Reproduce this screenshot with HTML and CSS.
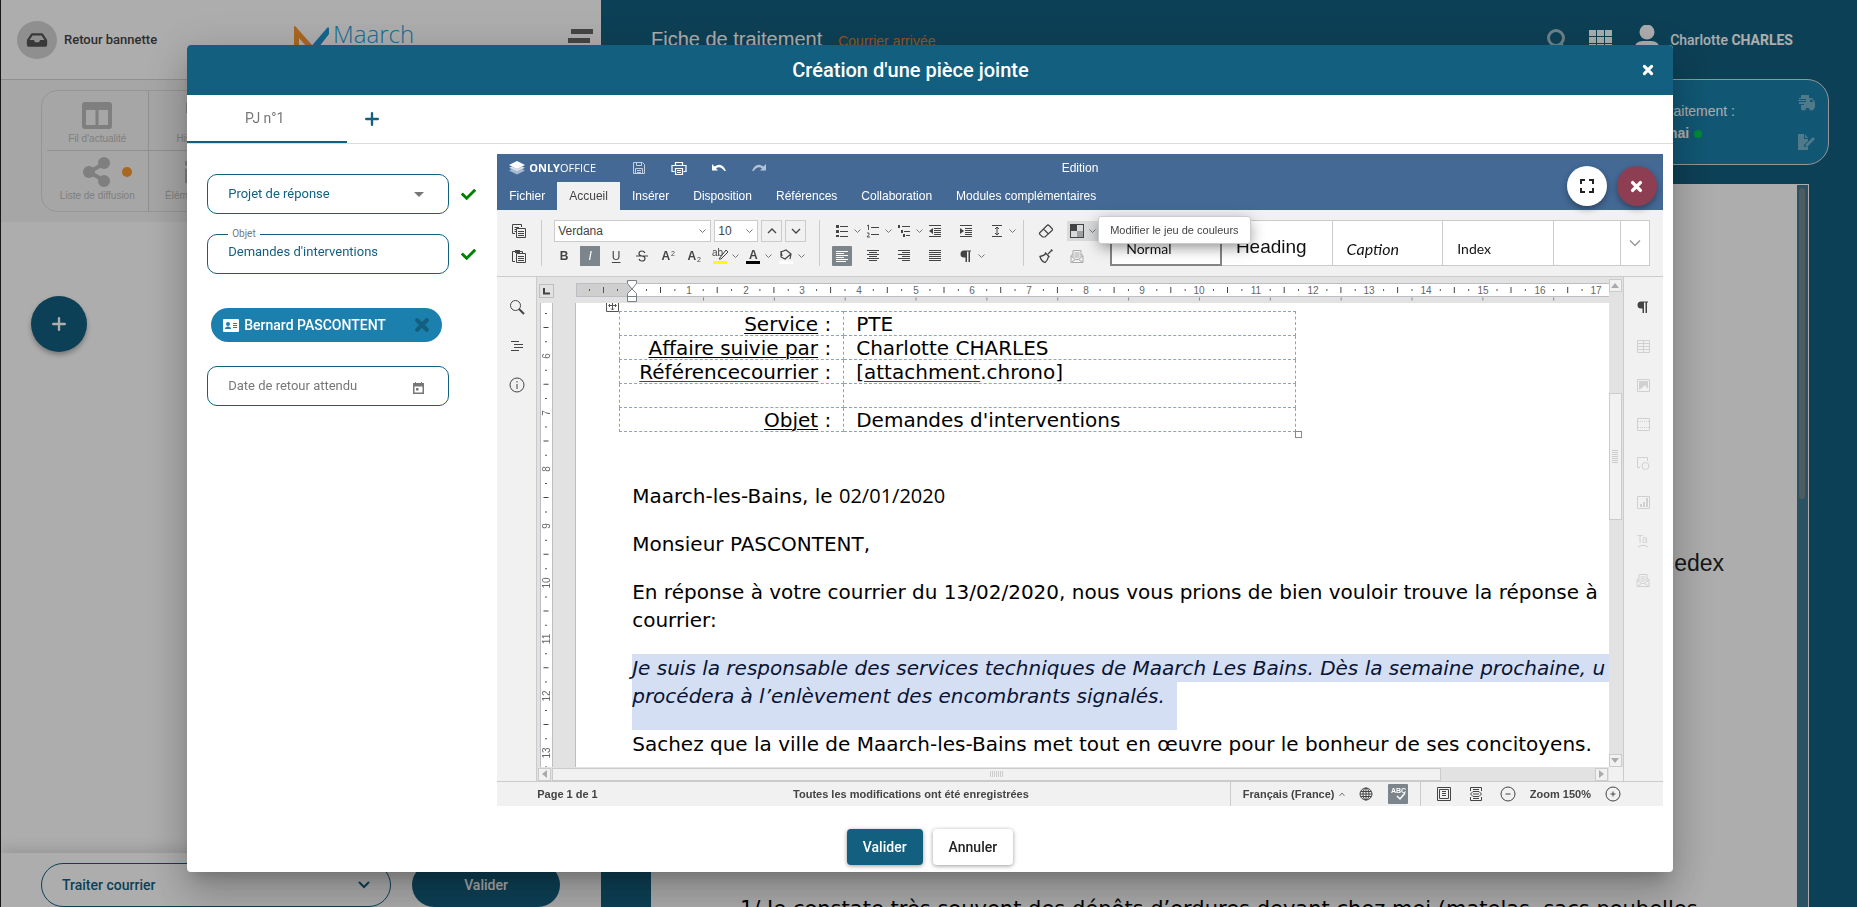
FILE: index.html
```html
<!DOCTYPE html>
<html lang="fr">
<head>
<meta charset="utf-8">
<title>Maarch - Création d'une pièce jointe</title>
<link rel="stylesheet" href="styles.css">
</head>
<body>
<svg class="defs" aria-hidden="true">
  <symbol id="caret" viewBox="0 0 7 5"><path d="M.5 .5L3.500 3.500L6.500 .5" fill="none" stroke="#777"/></symbol>
  <symbol id="check" viewBox="0 0 512 512"><path d="M173.900 439.400l-166.400-166.400c-10-10-10-26.200 0-36.200l36.200-36.200c10-10 26.200-10 36.200 0L192 312.700 432.100 72.600c10-10 26.200-10 36.200 0l36.200 36.200c10 10 10 26.200 0 36.200l-294.400 294.400c-10 10-26.200 10-36.200 0z"/></symbol>
  <symbol id="cross" viewBox="0 0 10 10"><path d="M2 2L8 8M8 2L2 8" fill="none" stroke="currentColor" stroke-width="2.600" stroke-linecap="round"/></symbol>
  <symbol id="plus" viewBox="0 0 12 12"><path d="M6 1V11M1 6H11" fill="none" stroke="currentColor" stroke-width="2" stroke-linecap="round"/></symbol>
  <symbol id="para" viewBox="0 0 16 16"><path d="M13 2.500H6a3.500 3.500 0 0 0 0 7H7.500V14H9V3.500H10.500V14H12V3.500H13z" fill="currentColor"/></symbol>
  <symbol id="mail" viewBox="0 0 16 16"><path d="M4 6L2 7.500V14.500H14V7.500L12 6M4 9V2.500H12V9M2 8L6.500 11.500H9.500L14 8M2.500 14L6.500 11.500M13.500 14L9.500 11.500M5.500 5H10.500M5.500 7H10.500M5.500 9H10.500" fill="none" stroke="currentColor"/></symbol>
</svg>

<div class="app">
  <section class="side">
    <header class="side-head">
      <a class="back" href="#">
        <span class="back-icon"><svg width="22" height="18" viewBox="0 0 576 512"><path fill="currentColor" d="M567.900 243.900L462.400 85.700A48 48 0 0 0 422.500 64H153.500a48 48 0 0 0-39.900 21.400L8.100 243.900A48 48 0 0 0 0 270.500V400a48 48 0 0 0 48 48h480a48 48 0 0 0 48-48V270.500a48 48 0 0 0-8.100-26.600zM162.300 128h251.400l85.300 128H376l-32 64H232l-32-64H77z"/></svg></span>
        <span>Retour bannette</span>
      </a>
      <div class="brand">
        <svg width="36" height="34" viewBox="0 0 36 34"><path d="M0 32V4Q0 2 2 4L18 22V30L5 15V32z" fill="#f99830"/><path d="M15 26L33 5Q35 3 35 6V11L18 33z" fill="#1e96cf"/></svg>
        <span>Maarch</span>
      </div>
      <button class="burger" aria-label="Menu"><i></i><i></i></button>
    </header>
    <div class="tools-band">
      <nav class="tools">
        <a href="#"><svg width="30" height="27" viewBox="0 0 30 27"><path fill="currentColor" fill-rule="evenodd" d="M3 0H27a3 3 0 0 1 3 3V24a3 3 0 0 1-3 3H3a3 3 0 0 1-3-3V3a3 3 0 0 1 3-3zM4 8V23H13.500V8zM16.500 8V23H26V8z"/></svg>Fil d'actualité</a>
        <a href="#"><svg width="30" height="27" viewBox="0 0 30 27"><path fill="currentColor" d="M2 0V11H13L9 7A9 9 0 1 1 7 20L4 23A13 13 0 1 0 6 4z"/></svg>Historique</a>
        <a href="#"><svg width="28" height="30" viewBox="0 0 28 30"><path d="M22 6L6 15L22 24" fill="none" stroke="currentColor" stroke-width="4"/><circle cx="21" cy="6" r="6" fill="currentColor"/><circle cx="6" cy="15" r="6" fill="currentColor"/><circle cx="21" cy="24" r="6" fill="currentColor"/></svg>Liste de diffusion<b class="dot"></b></a>
        <a href="#"><svg width="28" height="30" viewBox="0 0 28 30"><path fill="currentColor" d="M0 4H28V8L14 16L0 8zM0 11L14 19L28 11V26H0z"/></svg>Éléments joints</a>
      </nav>
    </div>
    <div class="side-body"><button class="fab" aria-label="Ajouter"><svg width="14" height="14"><use href="#plus"/></svg></button></div>
    <footer class="side-foot">
      <button class="action">Traiter courrier<svg width="12" height="8" viewBox="0 0 12 8"><path d="M1.500 1.500L6 6L10.500 1.500" fill="none" stroke="currentColor" stroke-width="2" stroke-linecap="round"/></svg></button>
      <button class="go">Valider</button>
    </footer>
  </section>

  <main class="main">
    <header class="main-head">
      <h1>Fiche de traitement</h1><span class="kind">Courrier arrivée</span>
      <div class="user">
        <svg width="20" height="22" viewBox="0 0 20 22" class="faded"><circle cx="9" cy="9" r="7.500" fill="none" stroke="currentColor" stroke-width="3"/><path d="M14 15L19 21" stroke="currentColor" stroke-width="3"/></svg>
        <svg width="23" height="20" viewBox="0 0 23 20"><path fill="currentColor" d="M0 0H7V6H0zM8 0H15V6H8zM16 0H23V6H16zM0 7H7V13H0zM8 7H15V13H8zM16 7H23V13H16zM0 14H7V20H0zM8 14H15V20H8zM16 14H23V20H16z"/></svg>
        <svg width="26" height="30" viewBox="0 0 26 30"><ellipse cx="13" cy="7" rx="7.500" ry="7.500" fill="currentColor"/><path d="M0 30V24Q1 16 9 16H17Q25 16 26 24V30z" fill="currentColor"/></svg>
        <span>Charlotte <b>CHARLES</b></span>
      </div>
    </header>
    <div class="info-card">
      <div class="info-text"><span>traitement :</span><b>mai<i></i></b></div>
      <div class="info-icons">
        <svg width="18" height="16" viewBox="0 0 18 16"><path fill="currentColor" d="M3 0H11V3H14L17 7V13H16A2.500 2.500 0 0 1 11 13H8A2.500 2.500 0 0 1 3 13V10H6V9H1V7H8V6H0V5H8V4H1V3H3z"/><path d="M12 4.500H13.500L15.500 7H12z" fill="#1a80ab"/></svg>
        <svg width="17" height="16" viewBox="0 0 17 16"><path fill="currentColor" d="M0 0H6V5H10V7L6 11V13H9L10 12V16H0zM7 0L10 4H7zM15 3L17 5L10 12L7 13L8 10z"/></svg>
      </div>
    </div>
    <div class="letter">
      <div class="letter-page"><p class="place">Cedex</p><p class="plaint">1/ Je constate très souvent des dépôts d’ordures devant chez moi (matelas, sacs poubelles,</p></div>
      <div class="letter-bar"><i></i></div>
    </div>
  </main>
</div>

<div class="backdrop">
<div class="modal" role="dialog" aria-labelledby="dlg-title">
  <header class="modal-head"><h2 id="dlg-title">Création d'une pièce jointe</h2><button aria-label="Fermer"><svg width="12" height="12"><use href="#cross"/></svg></button></header>
  <nav class="tabs"><button class="tab">PJ n°1</button><button class="add" aria-label="Ajouter une pièce jointe"><svg width="14" height="14"><use href="#plus"/></svg></button></nav>
  <div class="modal-body">
    <form class="form">
      <div class="row"><div class="field"><select aria-label="Type"><option>Projet de réponse</option></select><svg width="10" height="5" viewBox="0 0 10 5"><path d="M0 0H10L5 5z" fill="#777"/></svg></div><svg class="ok" width="15" height="15"><use href="#check"/></svg></div>
      <div class="row"><div class="field"><label for="objet">Objet</label><input id="objet" type="text" value="Demandes d'interventions"></div><svg class="ok" width="15" height="15"><use href="#check"/></svg></div>
      <div class="chip"><svg width="16" height="13" viewBox="0 0 16 13"><rect width="16" height="13" rx="1" fill="#fff"/><circle cx="5" cy="5" r="2" fill="#1b80ad"/><path d="M2 10Q2 7.500 5 7.500T8 10zM10 4H14V5H10zM10 6H14V7H10zM10 8H14V9H10z" fill="#1b80ad"/></svg><span>Bernard PASCONTENT</span><button type="button" aria-label="Retirer"><svg width="16" height="16"><use href="#cross"/></svg></button></div>
      <div class="row"><div class="field"><input type="text" placeholder="Date de retour attendu" aria-label="Date de retour attendu"><svg class="cal" width="11" height="12" viewBox="0 0 11 12"><path d="M0 1H2V0H3V1H8V0H9V1H11V12H0zM1.500 4.500V10.500H9.500V4.500zM3 6H5.500V8.500H3z" fill="#777" fill-rule="evenodd"/></svg></div></div>
    </form>

    <section class="editor">
      <div class="round-btns">
        <button class="expand" aria-label="Plein écran"><svg width="14" height="14" viewBox="0 0 14 14"><path d="M1 5V1H5M9 1H13V5M13 9V13H9M5 13H1V9" fill="none" stroke="#222" stroke-width="2"/></svg></button>
        <button class="quit" aria-label="Fermer l'éditeur"><svg width="13" height="13"><use href="#cross"/></svg></button>
      </div>
      <header class="ed-top">
        <div class="ed-title">
          <div class="logo"><svg width="16" height="14" viewBox="0 0 16 14"><path d="M0 9.500L3 8L8 10.500L13 8L16 9.500L8 13.500z" fill="#a9bbd2"/><path d="M0 6.800L3 5.500L8 8L13 5.500L16 6.800L8 10.600z" fill="#d5deea"/><path d="M8 0L16 4L8 8L0 4z" fill="#fff"/></svg><span><b>ONLY</b>OFFICE</span></div>
          <div class="quick">
            <button aria-label="Enregistrer"><svg width="16" height="16" viewBox="0 0 16 16"><path d="M2.500 2.500H11.500L13.500 4.500V13.500H2.500zM5.500 2.500V5.500H10.500V2.500M4.500 13V8.500H11.500V13M6 10.500H10M6 12.500H10" fill="none" stroke="#c3cfdf"/></svg></button>
            <button aria-label="Imprimer"><svg width="16" height="16" viewBox="0 0 16 16"><path d="M4.500 5V2.500H11.500V5M3.500 11.500H1V5.500H15V11.500H12.500M4.500 8.500H11.500V14.500H4.500zM6 10.500H10M6 12.500H10" fill="none" stroke="#fff" stroke-width="1.200"/></svg></button>
            <button aria-label="Annuler"><svg width="16" height="16" viewBox="0 0 16 16"><path d="M1 4V10.500H7L5 8.500Q9 5 13.500 11H15Q11 1.500 3.500 6.500z" fill="#fff"/></svg></button>
            <button aria-label="Rétablir"><svg width="16" height="16" viewBox="0 0 16 16"><path d="M15 4V10.500H9L11 8.500Q7 5 2.500 11H1Q5 1.500 12.500 6.500z" fill="#b4c3d5"/></svg></button>
          </div>
          <span class="doc-name">Edition</span>
        </div>
        <nav class="ed-tabs"><button>Fichier</button><button class="on">Accueil</button><button>Insérer</button><button>Disposition</button><button>Références</button><button>Collaboration</button><button>Modules complémentaires</button></nav>
      </header>

      <div class="toolbar">
        <div class="group g-copy">
          <div class="r1"><button class="ic" aria-label="Copier"><svg width="16" height="16" viewBox="0 0 16 16"><path d="M4 10.500H1.500V1.500H10.500V4M3.500 4.500H8M3.500 6.500H5M3.500 8.500H5M5.500 5.500H14.500V14.500H5.500zM7 8.500H13M7 10.500H13M7 12.500H13" fill="none" stroke="#444"/></svg></button></div>
          <div class="r2"><button class="ic" aria-label="Coller"><svg width="16" height="16" viewBox="0 0 16 16"><path d="M4 13.500H1.500V3.500H11.500V5M5.500 5.500H14.500V14.500H5.500zM7 8.500H13M7 10.500H13M7 12.500H13" fill="none" stroke="#444"/><path d="M4 2H9V5H4z" fill="#444"/></svg></button></div>
        </div>
        <div class="group g-font">
          <div class="r1">
            <button class="combo font">Verdana<svg width="7" height="5"><use href="#caret"/></svg></button>
            <button class="combo size">10<svg width="7" height="5"><use href="#caret"/></svg></button>
            <button class="step" aria-label="Agrandir"><svg width="10" height="6" viewBox="0 0 10 6"><path d="M1 5L5 1L9 5" fill="none" stroke="#444" stroke-width="1.300"/></svg></button>
            <button class="step" aria-label="Réduire"><svg width="10" height="6" viewBox="0 0 10 6"><path d="M1 1L5 5L9 1" fill="none" stroke="#444" stroke-width="1.300"/></svg></button>
          </div>
          <div class="r2">
            <button class="ic"><b>B</b></button><button class="ic on"><em>I</em></button><button class="ic"><u>U</u></button><button class="ic" aria-label="Barré"><svg width="14" height="14" viewBox="0 0 14 14"><path d="M10 4Q9 2 7 2Q4 2 4 4.500Q4 6.500 7 7Q10 7.500 10 9.500Q10 12 7 12Q4.500 12 4 10M1 7H13" fill="none" stroke="#444" stroke-width="1.200"/></svg></button><button class="ic"><b>A</b><sup>2</sup></button><button class="ic"><b>A</b><sub>2</sub></button>
            <div class="colors">
              <button aria-label="Surlignage"><svg width="20" height="20" viewBox="0 0 20 20"><text x="2" y="10" font-size="10" fill="#444">ab</text><path d="M9 13L16 4L18 6L11 13z" fill="#f1f1f1" stroke="#444"/><path d="M3 15H17V18H3z" fill="#ff0"/></svg><svg class="dd" width="7" height="5"><use href="#caret"/></svg></button>
              <button aria-label="Couleur de police"><svg width="20" height="20" viewBox="0 0 20 20"><text x="6" y="13" font-size="12" font-weight="700" fill="#444">A</text><path d="M3 15H17V18H3z" fill="#000"/></svg><svg class="dd" width="7" height="5"><use href="#caret"/></svg></button>
              <button aria-label="Remplissage"><svg width="20" height="20" viewBox="0 0 20 20"><path d="M5 6L10 4L15 8L9 13L5 11zM6 10L5 5M15 8L14 13" fill="none" stroke="#444" stroke-width="1.200"/><path d="M3 15H17V18H3z" fill="#fff"/></svg><svg class="dd" width="7" height="5"><use href="#caret"/></svg></button>
            </div>
          </div>
        </div>
        <div class="group g-para">
          <div class="r1 s31">
            <button aria-label="Puces"><svg width="20" height="16" viewBox="0 0 20 16"><path d="M4 2H7V5H4zM4 7H7V10H4zM4 12H7V14H4z" fill="#444"/><path d="M8 3.500H16M8 8.500H16M8 13.500H16" stroke="#444" stroke-width="1.200"/></svg><svg class="dd" width="7" height="5"><use href="#caret"/></svg></button>
            <button aria-label="Numérotation"><svg width="20" height="16" viewBox="0 0 20 16"><path d="M8 4.500H16M8 11.500H16" stroke="#444" stroke-width="1.200"/><path d="M4 3L5.500 2V7M4 10H6V11.500L4 14H7" fill="none" stroke="#555"/></svg><svg class="dd" width="7" height="5"><use href="#caret"/></svg></button>
            <button aria-label="Liste multiniveau"><svg width="20" height="16" viewBox="0 0 20 16"><path d="M4 2H6V5H4zM7 7H9V10H7zM9 11H11V14H9z" fill="#444"/><path d="M8 3.500H16M10 8.500H16M12 12.500H16" stroke="#444" stroke-width="1.200"/></svg><svg class="dd" width="7" height="5"><use href="#caret"/></svg></button>
            <button aria-label="Diminuer le retrait"><svg width="20" height="16" viewBox="0 0 20 16"><path d="M4 2.500H16M9 5.500H16M9 7.500H16M9 9.500H16M9 11.500H16M4 13.500H16" stroke="#444"/><path d="M8 5V11L4 8z" fill="#444"/></svg></button>
            <button aria-label="Augmenter le retrait"><svg width="20" height="16" viewBox="0 0 20 16"><path d="M4 2.500H16M9 5.500H16M9 7.500H16M9 9.500H16M9 11.500H16M4 13.500H16" stroke="#444"/><path d="M4 5V11L8 8z" fill="#444"/></svg></button>
            <button aria-label="Interligne"><svg width="20" height="16" viewBox="0 0 20 16"><path d="M5 2.500H15M5 13.500H15M10 4V12M8 6L10 4L12 6M8 10L10 12L12 10" fill="none" stroke="#444"/></svg><svg class="dd" width="7" height="5"><use href="#caret"/></svg></button>
          </div>
          <div class="r2 s31">
            <button class="left" aria-label="Aligner à gauche"><svg width="20" height="20" viewBox="0 0 20 20"><rect width="20" height="20" rx="1" fill="#7d858c"/><path d="M4 5.500H16M4 7.500H12M4 9.500H16M4 11.500H12M4 13.500H16M4 15.500H14" stroke="#fff"/></svg></button>
            <button aria-label="Centrer"><svg width="20" height="16" viewBox="0 0 20 16"><path d="M4 2.500H16M6 4.500H14M4 6.500H16M6 8.500H14M4 10.500H16M6 12.500H14" stroke="#444"/></svg></button>
            <button aria-label="Aligner à droite"><svg width="20" height="16" viewBox="0 0 20 16"><path d="M4 2.500H16M8 4.500H16M4 6.500H16M8 8.500H16M4 10.500H16M8 12.500H16" stroke="#444"/></svg></button>
            <button aria-label="Justifier"><svg width="20" height="16" viewBox="0 0 20 16"><path d="M4 2.500H16M4 4.500H16M4 6.500H16M4 8.500H16M4 10.500H16M4 12.500H16" stroke="#444"/></svg></button>
            <button aria-label="Caractères non imprimables"><svg width="20" height="16"><use href="#para"/></svg><svg class="dd" width="7" height="5"><use href="#caret"/></svg></button>
          </div>
        </div>
        <div class="group g-misc">
          <div class="r1 s31">
            <button aria-label="Effacer le style"><svg width="20" height="16" viewBox="0 0 20 16"><path d="M3.500 10L11 2.500Q12 1.500 13 2.500L16 5.500Q17 6.500 16 7.500L9 14H6.500L3.500 11zM7.500 6L12.500 11" fill="none" stroke="#444" stroke-width="1.200"/></svg></button>
            <div class="scheme"><button aria-label="Modifier le jeu de couleurs"><svg width="20" height="16" viewBox="0 0 20 16"><path d="M3 1H17V15H3z" fill="#444"/><path d="M10 2H16V8H10zM4 8H10V14H4z" fill="#d8dadc"/><path d="M10 8H16V14H10z" fill="#a0a0a0"/></svg><svg class="dd" width="7" height="5"><use href="#caret"/></svg></button><div class="tip" role="tooltip">Modifier le jeu de couleurs</div></div>
          </div>
          <div class="r2 s31">
            <button aria-label="Copier le style"><svg width="20" height="16" viewBox="0 0 20 16"><path d="M16 2L12 6M9 4.500L13.500 9M10 5.500Q8 8 4 8.500Q5 13 9 14.500Q12 12 12.500 8.500M15 1.500L16.500 3" fill="none" stroke="#444" stroke-width="1.300"/></svg></button>
            <button class="dim" aria-label="Publipostage"><svg width="20" height="16"><use href="#mail"/></svg></button>
          </div>
        </div>
        <div class="gallery"><button class="sel">Normal</button><button class="heading">Heading</button><button class="caption">Caption</button><button>Index</button><button aria-label="Style"></button><button class="more" aria-label="Plus de styles"><svg width="12" height="8" viewBox="0 0 12 8"><path d="M1 1.500L6 6.500L11 1.500" fill="none" stroke="#999" stroke-width="1.500"/></svg></button></div>
      </div>

      <div class="work">
        <aside class="rail left-rail">
          <button aria-label="Rechercher"><svg width="16" height="16" viewBox="0 0 16 16"><circle cx="6.500" cy="6.500" r="5" fill="none" stroke="#444"/><path d="M10 10L15 15" stroke="#444" stroke-width="2"/></svg></button>
          <button aria-label="Navigation"><svg width="16" height="16" viewBox="0 0 16 16"><path d="M2 3.500H10M5 6.500H14M5 9.500H14M2 12.500H10" stroke="#444"/></svg></button>
          <button aria-label="Informations"><svg width="16" height="16" viewBox="0 0 16 16"><circle cx="8" cy="8" r="7" fill="none" stroke="#444"/><path d="M8 4V5.500M8 7V12" stroke="#444"/></svg></button>
        </aside>
        <div class="sheet">
          <div class="corner"><span><svg width="7" height="7" viewBox="0 0 7 7"><path d="M1 0V5.500H7" fill="none" stroke="#444" stroke-width="2"/></svg></span></div>
          <svg class="hruler" height="26">
            <rect x="22" y="6" width="100%" height="14" fill="#bbbec2"/>
            <rect x="23" y="7" width="55" height="12" fill="#cfcfcf"/>
            <rect x="78" y="7" width="100%" height="12" fill="#fff"/>
            <line x1="92" x2="100%" y1="13" y2="13" stroke="#555" stroke-width="2" stroke-dasharray="1 27.350"/>
            <line x1="106" x2="100%" y1="13" y2="13" stroke="#444" stroke-width="6" stroke-dasharray="1 55.700"/>
            <path d="M35 12H36V14H35zM49 10H50V16H49zM63 12H64V14H63z" fill="#555"/>
            <line x1="149" x2="100%" y1="22" y2="22" stroke="#888" stroke-width="3" stroke-dasharray="1 69.850"/>
            <g text-anchor="middle" font-size="10" fill="#666"><text x="135" y="17">1</text><text x="192" y="17">2</text><text x="248" y="17">3</text><text x="305" y="17">4</text><text x="362" y="17">5</text><text x="418" y="17">6</text><text x="475" y="17">7</text><text x="532" y="17">8</text><text x="588" y="17">9</text><text x="645" y="17">10</text><text x="702" y="17">11</text><text x="759" y="17">12</text><text x="815" y="17">13</text><text x="872" y="17">14</text><text x="929" y="17">15</text><text x="986" y="17">16</text><text x="1042" y="17">17</text></g>
            <path d="M73.500 3.500H82.500V6.500L78 12L82.500 16.500V24.500H73.500V16.500L78 12L73.500 6.500zM73.500 19.500H82.500" fill="#fff" stroke="#777e86"/>
          </svg>
          <div class="vbar"><button class="arr" aria-label="Haut"><svg width="8" height="5" viewBox="0 0 8 5"><path d="M0 5H8L4 0z" fill="#aaa"/></svg></button><span class="gap-top"></span><span class="vthumb"><svg width="6" height="13" viewBox="0 0 6 13"><path d="M0 .5H6M0 2.500H6M0 4.500H6M0 6.500H6M0 8.500H6M0 10.500H6M0 12.500H6" stroke="#ccc"/></svg></span><span class="gap-bot"></span><button class="arr" aria-label="Bas"><svg width="8" height="5" viewBox="0 0 8 5"><path d="M0 0H8L4 5z" fill="#aaa"/></svg></button></div>
          <svg class="vruler" width="17" height="100%">
            <rect x="3" y="0" width="13" height="100%" fill="#bbbec2"/><rect x="4" y="0" width="11" height="100%" fill="#fff"/>
            <line x1="9" x2="9" y1="10" y2="100%" stroke="#555" stroke-width="2" stroke-dasharray="1 27.350"/>
            <line x1="9" x2="9" y1="24" y2="100%" stroke="#444" stroke-width="5" stroke-dasharray="1 55.700"/>
            <g text-anchor="middle" font-size="10" fill="#666"><text transform="translate(13 53) rotate(-90)">6</text><text transform="translate(13 110) rotate(-90)">7</text><text transform="translate(13 166) rotate(-90)">8</text><text transform="translate(13 223) rotate(-90)">9</text><text transform="translate(13 280) rotate(-90)">10</text><text transform="translate(13 336) rotate(-90)">11</text><text transform="translate(13 393) rotate(-90)">12</text><text transform="translate(13 450) rotate(-90)">13</text></g>
          </svg>
          <div class="view"><article class="page">
            <div class="tbl-wrap">
              <svg class="mover" width="13" height="9" viewBox="0 0 13 9"><path d="M.5 0V8.500H12.500V0M6.500 0V7M3 2.500H10M5 5.500L6.500 7L8 5.500M4 1L2.500 2.500L4 4M9 1L10.500 2.500L9 4" fill="none" stroke="#555"/></svg>
              <table>
                <tr><th><u>Service</u> :</th><td>PTE</td></tr>
                <tr><th><u>Affaire suivie par</u> :</th><td>Charlotte CHARLES</td></tr>
                <tr><th><u class="err">Référencecourrier</u> :</th><td>[<u class="err">attachment</u>.chrono]</td></tr>
                <tr><th></th><td></td></tr>
                <tr><th><u>Objet</u> :</th><td>Demandes d'interventions</td></tr>
              </table>
              <span class="resizer"></span>
            </div>
            <div class="text">
              <p>Maarch-les-Bains, le <span class="date">02/01/2020</span></p>
              <p>Monsieur PASCONTENT,</p>
              <p>En réponse à votre courrier du 13/02/2020, nous vous prions de bien vouloir trouve la réponse à<br>courrier:</p>
              <p class="picked"><span class="full">Je suis la responsable des services techniques de Maarch Les Bains. Dès la semaine prochaine, u</span><span class="part">procédera à l’enlèvement des encombrants signalés.</span></p>
              <p>Sachez que la ville de Maarch-les-Bains met tout en œuvre pour le bonheur de ses concitoyens.</p>
            </div>
          </article></div>
          <div class="hbar"><button class="arr" aria-label="Gauche"><svg width="5" height="8" viewBox="0 0 5 8"><path d="M5 0V8L0 4z" fill="#aaa"/></svg></button><span class="hthumb"><svg width="13" height="6" viewBox="0 0 13 6"><path d="M.5 0V6M2.500 0V6M4.500 0V6M6.500 0V6M8.500 0V6M10.500 0V6M12.500 0V6" stroke="#ccc"/></svg></span><span class="hgap"></span><button class="arr" aria-label="Droite"><svg width="5" height="8" viewBox="0 0 5 8"><path d="M0 0V8L5 4z" fill="#aaa"/></svg></button></div>
          <div class="end"></div>
        </div>
        <aside class="rail right-rail">
          <button class="act" aria-label="Paragraphe"><svg width="16" height="16"><use href="#para"/></svg></button>
          <button aria-label="Tableau"><svg width="16" height="16" viewBox="0 0 16 16"><path d="M2.500 2.500H14.500V14.500H2.500zM2.500 5.500H14.500M2.500 8.500H14.500M2.500 11.500H14.500M8.500 2.500V14.500" fill="none" stroke="currentColor"/></svg></button>
          <button aria-label="Image"><svg width="16" height="16" viewBox="0 0 16 16"><path d="M2.500 2.500H14.500V14.500H2.500z" fill="none" stroke="currentColor"/><path d="M4 4H13V12L10 8L8 10L4 13z" fill="currentColor"/></svg></button>
          <button aria-label="En-tête"><svg width="16" height="16" viewBox="0 0 16 16"><path d="M2.500 2.500H14.500V14.500H2.500z" fill="none" stroke="currentColor"/><path d="M3 5.500H14M3 11.500H14" stroke="currentColor" stroke-dasharray="1 1"/></svg></button>
          <button aria-label="Forme"><svg width="16" height="16" viewBox="0 0 16 16"><path d="M5 12.500H2.500V2.500H12.500V6" fill="none" stroke="currentColor"/><circle cx="10.500" cy="11" r="3.500" fill="none" stroke="currentColor"/></svg></button>
          <button aria-label="Graphique"><svg width="16" height="16" viewBox="0 0 16 16"><path d="M2.500 2.500H14.500V14.500H2.500z" fill="none" stroke="currentColor"/><path d="M5 10H7V13H5zM8 8H10V13H8zM11 4H13V13H11z" fill="currentColor"/></svg></button>
          <button aria-label="Text Art"><svg width="16" height="16" viewBox="0 0 16 16"><text x="2" y="10" font-size="10" fill="currentColor">Ta</text><path d="M3 14Q8 10.500 13 14" fill="none" stroke="currentColor"/></svg></button>
          <button aria-label="Publipostage"><svg width="16" height="16"><use href="#mail"/></svg></button>
        </aside>
      </div>

      <footer class="status">
        <span class="pg">Page 1 de 1</span><span class="msg">Toutes les modifications ont été enregistrées</span>
        <div class="lang"><span>Français (France)</span><svg width="6" height="5" viewBox="0 0 6 5"><path d="M.5 4L3 1L5.500 4" fill="none" stroke="#777"/></svg>
          <button aria-label="Langue du document"><svg width="14" height="14" viewBox="0 0 14 14"><circle cx="7" cy="7" r="6" fill="none" stroke="#444"/><ellipse cx="7" cy="7" rx="3" ry="6" fill="none" stroke="#444"/><path d="M7 1V13M1 7H13M2 4.500H12M2 9.500H12" stroke="#444"/></svg></button>
          <button class="spell" aria-label="Orthographe"><svg width="20" height="20" viewBox="0 0 20 20"><rect width="20" height="20" rx="1" fill="#7d858c"/><text x="3" y="9" font-size="7" font-weight="700" fill="#fff">ABC</text><path d="M9 12L12 15L17 9" fill="none" stroke="#fff" stroke-width="1.500"/></svg></button></div>
        <div class="zoom">
          <button aria-label="Page entière"><svg width="16" height="16" viewBox="0 0 16 16"><path d="M1.500 1.500H14.500V14.500H1.500zM3.500 3.500H12.500V12.500H3.500zM6 5.500H10M6 7.500H10M6 9.500H10" fill="none" stroke="#444"/></svg></button>
          <button aria-label="Largeur"><svg width="16" height="16" viewBox="0 0 16 16"><path d="M2.500 5V1.500H13.500V5M2.500 11V14.500H13.500V11M5 3.500H11M5 12.500H11M5 8H11M2.500 8L5 5.500H11L13.500 8L11 10.500H5z" fill="none" stroke="#444"/></svg></button>
          <button aria-label="Zoom arrière"><svg width="16" height="16" viewBox="0 0 16 16"><circle cx="8" cy="8" r="7" fill="none" stroke="#444"/><path d="M5.500 8H10.500" stroke="#444"/></svg></button>
          <span>Zoom 150%</span>
          <button aria-label="Zoom avant"><svg width="16" height="16" viewBox="0 0 16 16"><circle cx="8" cy="8" r="7" fill="none" stroke="#444"/><path d="M5.500 8H10.500M8 5.500V10.500" stroke="#444"/></svg></button>
        </div>
      </footer>
    </section>
  </div>
  <footer class="modal-foot"><button class="primary">Valider</button><button>Annuler</button></footer>
</div>
</div>
</body>
</html>
```

FILE: styles.css
```css
* { box-sizing: border-box; }
body { margin: 0; height: 100vh; overflow: hidden; font-family: Roboto, sans-serif; font-size: 14px; background: #fff; }
button { font: inherit; color: inherit; background: none; border: 0; padding: 0; margin: 0; }
svg { display: block; flex: none; }
p, h1, h2 { margin: 0; }
a { color: inherit; text-decoration: none; }
.defs { position: absolute; width: 0; height: 0; }

/* Page behind the dialog */
.app { display: flex; height: 100vh; border-left: 1px solid #222; }
.side { flex: none; width: 600px; display: flex; flex-direction: column; }
.side-head { flex: none; height: 80px; display: flex; align-items: center; padding: 0 8px 0 16px; border-bottom: 1px solid #d4d4d4; }
.back { width: 277px; display: flex; align-items: center; gap: 7px; font-size: 13px; font-weight: 500; color: #444; }
.back-icon { width: 40px; height: 38px; border-radius: 50%; background: #d3d3d3; display: grid; place-items: center; color: #555; }
.brand { display: flex; align-items: flex-start; gap: 3px; height: 34px; margin-right: auto; color: #27a0dc; font: 300 24px/22px "Open Sans", sans-serif; }
.burger { display: grid; gap: 4px; width: 25px; margin-bottom: 8px; }
.burger i { height: 5px; width: 22px; background: #666; }
.burger i:first-child { margin-left: 3px; }
.tools-band { background: #f5f5f5; padding: 10px 40px; height: 142px; }
.tools { display: grid; grid-template-columns: repeat(5, 1fr); grid-template-rows: 60px 61px; border: 1px solid #ddd; border-radius: 16px; padding: 0 5px; height: 122px; }
.tools a { position: relative; display: flex; flex-direction: column; align-items: center; justify-content: flex-end; gap: 3px; font: 10px/12px "Liberation Sans", sans-serif; color: #bbb; padding-bottom: 5px; border-right: 1px solid #d4d4d4; }
.tools a:nth-child(-n+2) { border-bottom: 1px solid #d4d4d4; grid-row: 1; gap: 4px; }
.tools a:nth-child(n+3) { grid-row: 2; padding-bottom: 10px; }
.dot { position: absolute; right: 16px; top: 16px; width: 10px; height: 10px; border-radius: 50%; background: #f99830; }
.side-body { flex: 1; padding: 74px 30px; }
.fab { width: 56px; height: 56px; border-radius: 50%; background: #135f7f; color: #fff; display: grid; place-items: center; box-shadow: 0 3px 5px rgba(0,0,0,.3); }
.side-foot { height: 54px; display: flex; gap: 21px; padding: 10px 40px 0; box-shadow: 0 -5px 12px rgba(0,0,0,.12); }
.side-foot button { height: 44px; border-radius: 22px; font-weight: 500; }
.action { width: 350px; border: 1px solid #135f7f; color: #135f7f; display: flex; justify-content: space-between; align-items: center; padding: 0 20px; }
.go { flex: none; width: 148px; background: #135f7f; color: #fff; }
.main { flex: 1; min-width: 0; background: #135f7f; color: #fff; padding: 0 28px 0 50px; display: flex; flex-direction: column; font-family: "Liberation Sans", sans-serif; }
.main-head { flex: none; height: 79px; display: flex; align-items: center; gap: 16px; }
.main-head h1 { font-size: 20px; font-weight: 400; }
.kind { color: #d68032; font-size: 14px; padding-top: 3px; }
.user { margin-left: auto; display: flex; align-items: center; gap: 22px; padding-right: 36px; font-family: Roboto, sans-serif; font-weight: 500; }
.user span { margin-left: -12px; }
.user b { font-weight: 700; }
.faded { opacity: .6; }
.info-card { flex: none; height: 86px; border: 1px solid #ddd; border-radius: 22px; background: #1a80ab; display: flex; justify-content: flex-end; gap: 63px; padding: 15px 12px 14px; }
.info-text { font-size: 14px; line-height: 22px; padding-top: 5px; display: flex; flex-direction: column; }
.info-text b i { display: inline-block; width: 8px; height: 8px; border-radius: 50%; background: #00c853; margin-left: 5px; }
.info-icons { display: flex; flex-direction: column; justify-content: space-between; opacity: .4; }
.letter { margin: 19px 20px 0 0; flex: 1; min-height: 0; overflow: hidden; display: flex; border: 1px solid #fff; border-bottom: 0; background: #fff; color: #222; }
.letter-page { flex: 1; min-width: 0; padding: 366px 73px 0 88px; white-space: nowrap; }
.place { text-align: right; font-size: 23px; line-height: 24px; }
.plaint { font: 21px/26px "DejaVu Sans", sans-serif; margin-top: 321px; color: #000; }
.letter-bar { flex: none; width: 11px; background: #3f7a93; padding: 3px 2px; }
.letter-bar i { display: block; height: 311px; width: 6px; border-radius: 3px; background: #76868c; }

/* Dialog */
.backdrop { position: fixed; inset: 0; display: flex; justify-content: center; padding: 45px 0 35px 3px; background: rgba(0,0,0,.32); }
.modal { width: 80vw; background: #fff; border-radius: 4px; display: flex; flex-direction: column; box-shadow: 0 11px 15px -7px rgba(0,0,0,.2), 0 24px 38px 3px rgba(0,0,0,.14), 0 9px 46px 8px rgba(0,0,0,.12); }
.modal-head { flex: none; height: 50px; background: #135f7f; color: #fff; border-radius: 4px 4px 0 0; display: flex; align-items: center; padding-right: 19px; }
.modal-head h2 { flex: 1; text-align: center; font-size: 20px; font-weight: 500; margin-right: 8px; }
.tabs { flex: none; height: 49px; display: flex; border-bottom: 1px solid #dcdcdc; }
.tab { width: 160px; height: 48px; border-bottom: 2px solid #135f7f; color: #777; padding-right: 5px; }
.add { color: #135f7f; padding: 0 18px; }
.modal-body { flex: 1; min-height: 0; display: flex; padding: 10px 10px 0 20px; }
.form { flex: none; width: 290px; padding-top: 20px; color: #135f7f; }
.row { display: flex; align-items: center; gap: 12px; margin-bottom: 20px; }
.field { position: relative; width: 242px; height: 40px; border: 1px solid #135f7f; border-radius: 10px; display: flex; align-items: center; padding: 0 24px 0 20px; }
.field label { position: absolute; left: 20px; top: -9px; padding: 0 4px; background: #fff; color: #777; font-size: 10px; line-height: 16px; }
.field input, .field select { flex: 1; min-width: 0; border: 0; padding: 0; background: none; appearance: none; font: 13px/16px Roboto, sans-serif; color: #135f7f; outline: 0; }
#objet { padding-bottom: 4px; }
.cal { margin-top: 4px; }
.field input::placeholder { color: #777; opacity: 1; }
.ok { fill: green; }
.chip { width: 231px; height: 34px; margin: 34px 0 24px 4px; border-radius: 17px; background: #1b80ad; color: #fff; font-weight: 500; display: flex; align-items: center; gap: 5px; padding: 0 12px; }
.chip button { margin-left: auto; color: #135f7f; }
.modal-foot { flex: none; height: 66px; display: flex; justify-content: center; gap: 10px; padding-top: 23px; }
.modal-foot button { height: 36px; padding: 0 16px; border-radius: 4px; font-weight: 500; color: #222; background: #fff; box-shadow: 0 1px 4px rgba(0,0,0,.4); }
.modal-foot .primary { background: #135f7f; color: #fff; }

/* Document editor */
.editor { position: relative; flex: 1; min-width: 0; display: flex; flex-direction: column; font: 12px "Liberation Sans", sans-serif; color: #444; background: #f1f1f1; }
.editor button { display: flex; align-items: center; justify-content: center; }
.round-btns { position: absolute; z-index: 3; right: 6px; top: 12px; display: flex; gap: 10px; }
.round-btns button { width: 40px; height: 40px; border-radius: 50%; box-shadow: 0 3px 6px rgba(0,0,0,.35); }
.expand { background: #fff; }
.quit { background: #8e3e52; color: #fff; }
.ed-top { flex: none; background: #446995; color: #fff; }
.ed-title { height: 28px; display: grid; grid-template-columns: 122px 1fr; align-items: center; padding: 0 12px; }
.logo { grid-column: 1; grid-row: 1; display: flex; gap: 4px; align-items: center; font: 11px/14px "Open Sans", sans-serif; }
.quick { grid-column: 2; grid-row: 1; display: flex; gap: 24px; }
.doc-name { grid-column: 1 / 3; grid-row: 1; text-align: center; }
.ed-tabs { display: flex; }
.ed-tabs button { height: 28px; padding: 0 12px; }
.ed-tabs .on { background: #f1f1f1; color: #444; }
.toolbar { flex: none; height: 67px; border-bottom: 1px solid #cbcbcb; display: flex; padding: 10px 13px 10px 12px; }
.group { display: flex; flex-direction: column; gap: 4px; border-right: 1px solid #cbcbcb; margin-right: 12px; }
.r1, .r2 { display: flex; align-items: center; }
.r1 { height: 22px; gap: 3px; }
.r2 { height: 20px; gap: 6px; }
.g-copy { width: 33px; }
.g-font { width: 266px; }
.g-para { width: 192px; }
.g-misc { width: 62px; border: 0; }
.ic { width: 20px; height: 20px; }
.g-copy .ic { width: 16px; margin-left: 2px; }
.ic.on { background: #7d858c; color: #fff; }
.ic sup, .ic sub { font-size: 7px; line-height: 7px; margin-left: 1px; }
.ic sup { margin-bottom: 5px; }
.ic sub { margin-top: 6px; }
.editor .combo { height: 22px; background: #fff; border: 1px solid #cbcbcb; justify-content: space-between; padding: 0 4px 0 3px; }
.font { width: 157px; }
.size { width: 44px; }
.step { width: 21px; height: 22px; border: 1px solid #cbcbcb; }
.colors { display: flex; }
.editor .colors button { width: 33px; justify-content: flex-start; }
.colors .dd { margin-left: 2px; }
.s31 { gap: 0; }
.editor .s31 button { width: 31px; height: 20px; justify-content: flex-start; }
.s31 .dd { margin-left: 2px; }
.dim { opacity: .4; }
.scheme { position: relative; background: #d8dadc; }
.tip { position: absolute; z-index: 4; left: 31px; top: -5px; width: max-content; padding: 0 11px; background: #fff; border: 1px solid #cbcbcb; border-radius: 3px; font-size: 11px; line-height: 26px; box-shadow: 0 4px 15px -2px rgba(0,0,0,.5); }
.gallery { flex: 1; min-width: 0; display: grid; grid-template-columns: repeat(4, minmax(0, 111fr)) minmax(0, 67fr) 28px; background: #fff; border: 1px solid #cbcbcb; font-family: Lato, sans-serif; font-size: 14px; color: #111; }
.editor .gallery button { justify-content: flex-start; align-items: flex-end; border-right: 1px solid #cbcbcb; padding: 0 14px 8px; line-height: 16px; overflow: hidden; }
.editor .gallery .sel { border: 2px solid #848484; margin: -1px 0 -1px -1px; padding-bottom: 7px; }
.editor .gallery .heading { font: 19px/20px "Liberation Sans", sans-serif; }
.gallery .caption { font-style: italic; font-size: 16px; }
.editor .gallery .more { border: 0; padding: 0; justify-content: center; align-items: center; }
.work { flex: 1; min-height: 0; display: flex; }
.rail { flex: none; width: 40px; display: flex; flex-direction: column; align-items: center; gap: 23px; padding-top: 22px; }
.left-rail { border-right: 1px solid #cbcbcb; }
.right-rail { border-left: 1px solid #cbcbcb; color: #d0d0d0; }
.act { color: #444; }
.sheet { flex: 1; min-width: 0; display: grid; grid-template-columns: 17px minmax(0, 1fr) 14px; grid-template-rows: 26px minmax(0, 1fr) 14px; background: #e2e2e2; }
.corner { padding: 7px 0 0 2px; }
.corner span { display: grid; place-items: center; width: 15px; height: 14px; border: 1px solid #bbbec2; }
.hruler { width: 100%; }
.vbar { grid-row: 1 / 3; grid-column: 3; display: flex; flex-direction: column; padding-top: 2px; }
.arr { flex: none; width: 13px; height: 13px; border: 1px solid #cbcbcb; background: #f1f1f1; }
.gap-top { flex: 102; }
.gap-bot { flex: 236; }
.vthumb { flex: 125; width: 13px; border: 1px solid #cbcbcb; background: #f1f1f1; display: grid; place-items: center; }
.view { background: #e2e2e2; overflow: hidden; padding-left: 21px; }
.page { height: 100%; background: #fff; border-left: 1px solid #bbbec2; padding-top: 8px; font: 20px/28px "DejaVu Sans", sans-serif; color: #000; white-space: nowrap; }
.tbl-wrap { position: relative; width: 677px; margin-left: 43px; }
.mover { position: absolute; left: -13px; top: -8px; }
.resizer { position: absolute; right: -6px; bottom: -6px; width: 7px; height: 7px; border: 1px solid #888; background: #fff; }
table { width: 100%; border-collapse: collapse; table-layout: fixed; line-height: 22px; }
th, td { height: 24px; padding: 1px 12px 0; border: 1px dashed #8ba3c8; font-weight: 400; text-align: left; }
th { width: 224px; text-align: right; }
u { text-underline-offset: 2px; text-decoration-thickness: 1px; }
.err { text-decoration-color: #e00; }
.text { padding: 50px 0 0 56px; }
.text p { margin-bottom: 20px; }
.date { font-family: "Open Sans", sans-serif; line-height: 20px; }
.picked { font-style: italic; color: #0a1433; }
.text .picked { margin-bottom: 0; }
.full { display: block; background: #d4dff4; }
.part { display: inline-block; background: #d4dff4; padding: 0 12px 20px 0; }
.hbar { grid-column: 1 / 3; display: flex; align-items: center; gap: 1px; padding: 0 1px; }
.hthumb { flex: 890; height: 13px; border: 1px solid #cbcbcb; background: #f1f1f1; display: grid; place-items: center; }
.hgap { flex: 152; }
.end { background: #f1f1f1; }
.status { flex: none; height: 25px; border-top: 1px solid #cbcbcb; display: flex; align-items: center; padding-left: 40px; font-size: 11px; font-weight: 700; }
.pg { flex: 256; }
.msg { flex: 437; }
.lang, .zoom { display: flex; align-items: center; height: 24px; border-left: 1px solid #cbcbcb; }
.lang { width: 190px; padding-left: 12px; }
.lang > svg { margin: 0 14px 0 4px; }
.lang .spell { margin-left: 15px; }
.zoom { width: 243px; padding-left: 15px; gap: 16px; }
.zoom span { margin: 0 -2px; }
```
